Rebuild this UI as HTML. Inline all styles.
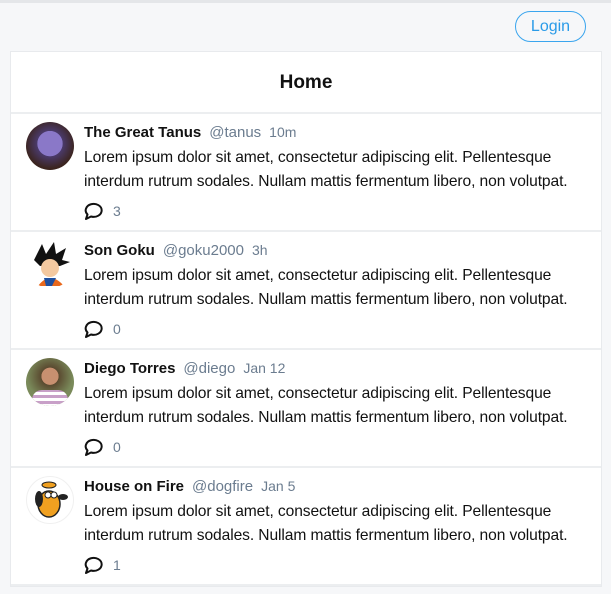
<!DOCTYPE html>
<html><head><meta charset="utf-8"><style>
*{box-sizing:border-box;margin:0;padding:0}
body{width:611px;height:594px;overflow:hidden;background:#f6f7f9;font-family:"Liberation Sans",sans-serif;position:relative}
.top{position:absolute;left:0;top:0;width:611px;height:3px;background:#e4e6e9}
.login{position:absolute;left:515px;top:11px;width:71px;height:31px;border:1px solid #3aa5ee;border-radius:16px;color:#2a9be8;font-size:16px;text-align:center;line-height:29px}
.card{position:absolute;left:10px;top:51px;width:592px;background:#fff;border:1px solid #e8eaed}
.hdr{height:62px;text-align:center;line-height:62px;font-size:19px;font-weight:bold;color:#111;border-bottom:2px solid #eceef0}
.tw{height:118px;border-bottom:2px solid #eceef0;position:relative}
.av{position:absolute;left:15px;top:8px;width:48px;height:48px;border-radius:50%;overflow:hidden}
.nm{position:absolute;left:73px;top:10px;font-size:15px;white-space:nowrap}
.nm b{color:#111}.nm span{color:#6b7c8f;margin-left:8px}.nm i{font-style:normal;color:#6b7c8f;font-size:14px;margin-left:8px}
.tx{position:absolute;left:73px;top:32px;font-size:15.6px;line-height:24px;color:#111;width:515px;letter-spacing:-0.1px}
.cm{position:absolute;left:72px;top:87px;display:flex;align-items:center;color:#6b7c8f;font-size:14px}
.cm svg{margin-right:10px}
</style></head><body>
<div class="top"></div>
<div class="login">Login</div>
<div class="card">
<div class="hdr">Home</div>

<div class="tw">
<div class="av" style="background:radial-gradient(circle at 50% 45%,#8a78c8 0 35%,#4a3a6a 36%,#3b241e 70%)"></div>
<div class="nm"><b>The Great Tanus</b><span>@tanus</span><i>10m</i></div>
<div class="tx">Lorem ipsum dolor sit amet, consectetur adipiscing elit. Pellentesque interdum rutrum sodales. Nullam mattis fermentum libero, non volutpat.</div>
<div class="cm"><svg width="20" height="19" viewBox="0 0 20 19"><path d="M3 18 L4.5 13.5 A8 6.5 0 1 1 8 15.5 Z" fill="none" stroke="#111" stroke-width="2" stroke-linejoin="round"/></svg>3</div>
</div>

<div class="tw">
<div class="av" style="background:#fff"><svg width="48" height="48"><path d="M8 20 L16 4 L20 14 L28 2 L30 14 L40 8 L36 20 L44 22 L34 26 L14 26Z" fill="#111"/><circle cx="24" cy="28" r="9" fill="#f4c9a0"/><path d="M12 46 Q24 30 38 46Z" fill="#e8681c"/><path d="M18 38 L30 38 L26 46 L20 46Z" fill="#1d4fa0"/></svg></div>
<div class="nm"><b>Son Goku</b><span>@goku2000</span><i>3h</i></div>
<div class="tx">Lorem ipsum dolor sit amet, consectetur adipiscing elit. Pellentesque interdum rutrum sodales. Nullam mattis fermentum libero, non volutpat.</div>
<div class="cm"><svg width="20" height="19" viewBox="0 0 20 19"><path d="M3 18 L4.5 13.5 A8 6.5 0 1 1 8 15.5 Z" fill="none" stroke="#111" stroke-width="2" stroke-linejoin="round"/></svg>0</div>
</div>

<div class="tw">
<div class="av" style="background:radial-gradient(circle at 50% 38%,#c89070 0 22%,#5a4a30 23%,#7a8a5a 60%);"><div style="position:absolute;left:6px;top:32px;width:36px;height:20px;background:repeating-linear-gradient(0deg,#c8a0c8 0 3px,#fff 3px 6px);border-radius:10px 10px 0 0"></div></div>
<div class="nm"><b>Diego Torres</b><span>@diego</span><i>Jan 12</i></div>
<div class="tx">Lorem ipsum dolor sit amet, consectetur adipiscing elit. Pellentesque interdum rutrum sodales. Nullam mattis fermentum libero, non volutpat.</div>
<div class="cm"><svg width="20" height="19" viewBox="0 0 20 19"><path d="M3 18 L4.5 13.5 A8 6.5 0 1 1 8 15.5 Z" fill="none" stroke="#111" stroke-width="2" stroke-linejoin="round"/></svg>0</div>
</div>

<div class="tw">
<div class="av" style="background:#fff;border:1px solid #f0f0f0"><svg width="48" height="48"><ellipse cx="22" cy="27" rx="11" ry="13" fill="#f0a020" stroke="#222" stroke-width="1.5"/><ellipse cx="22" cy="8" rx="7" ry="3" fill="#f0a020" stroke="#222"/><ellipse cx="12" cy="22" rx="4" ry="8" fill="#222"/><circle cx="21" cy="18" r="3" fill="#fff" stroke="#222"/><circle cx="27" cy="18" r="3" fill="#fff" stroke="#222"/><ellipse cx="36" cy="20" rx="5" ry="3" fill="#222"/></svg></div>
<div class="nm"><b>House on Fire</b><span>@dogfire</span><i>Jan 5</i></div>
<div class="tx">Lorem ipsum dolor sit amet, consectetur adipiscing elit. Pellentesque interdum rutrum sodales. Nullam mattis fermentum libero, non volutpat.</div>
<div class="cm"><svg width="20" height="19" viewBox="0 0 20 19"><path d="M3 18 L4.5 13.5 A8 6.5 0 1 1 8 15.5 Z" fill="none" stroke="#111" stroke-width="2" stroke-linejoin="round"/></svg>1</div>
</div>
</div>
</body></html>
